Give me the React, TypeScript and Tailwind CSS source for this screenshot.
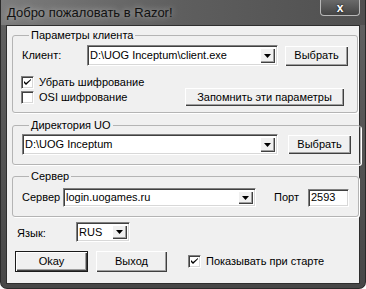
import React from "react";

const face = "bg-[#f0f0f0]";

function Raised({
  w,
  h,
  children,
  isDefault = false,
}: {
  w: number;
  h: number;
  children: React.ReactNode;
  isDefault?: boolean;
}) {
  return (
    <div
      style={{ width: w, height: h }}
      className={`flex items-center justify-center ${face} ${
        isDefault
          ? "border border-[#1a1a1a] shadow-[inset_1px_1px_0_#ffffff,inset_-1px_-1px_0_#404040,inset_-2px_-2px_0_#a0a0a0]"
          : "shadow-[inset_1px_1px_0_#ffffff,inset_-1px_-1px_0_#404040,inset_-2px_-2px_0_#a0a0a0]"
      }`}
    >
      {children}
    </div>
  );
}

function Sunken({ w, h, children }: { w: number; h: number; children?: React.ReactNode }) {
  return (
    <div
      style={{ width: w, height: h }}
      className="flex items-center bg-white border border-t-[#808080] border-l-[#808080] border-b-white border-r-white shadow-[inset_1px_1px_0_#404040,inset_-1px_-1px_0_#d8d8d8]"
    >
      {children}
    </div>
  );
}

function Combo({ w, h, value }: { w: number; h: number; value: string }) {
  return (
    <Sunken w={w} h={h}>
      <span className="flex-1 pl-[2px] truncate text-black">{value}</span>
      <div className="mr-[2px] self-stretch my-[2px] w-[15px] flex items-center justify-center bg-[#f0f0f0] shadow-[inset_1px_1px_0_#ffffff,inset_-1px_-1px_0_#404040,inset_-2px_-2px_0_#a0a0a0]">
        <svg width="7" height="4" viewBox="0 0 7 4">
          <path d="M0 0h7L3.5 4z" fill="#000" />
        </svg>
      </div>
    </Sunken>
  );
}

function Check({ checked, label }: { checked: boolean; label: string }) {
  return (
    <div className="flex items-center h-[14px]">
      <div className="w-[13px] h-[13px] bg-white border border-t-[#808080] border-l-[#808080] border-b-white border-r-white shadow-[inset_1px_1px_0_#404040,inset_-1px_-1px_0_#d8d8d8] flex items-center justify-center">
        {checked && (
          <svg width="7" height="7" viewBox="0 0 7 7">
            <path d="M0 2v2l2 2 5-5V0L2 4z" fill="#000" />
          </svg>
        )}
      </div>
      <span className="ml-[5px]">{label}</span>
    </div>
  );
}

function Group({
  title,
  className,
  children,
}: {
  title: string;
  className: string;
  children: React.ReactNode;
}) {
  return (
    <fieldset
      className={`border border-[#b4b4b4] rounded-[3px] shadow-[1px_1px_0_#ffffff] px-[9px] ${className}`}
    >
      <legend className="ml-[7px] px-[2px] leading-[13px]">{title}</legend>
      {children}
    </fieldset>
  );
}

export default function App() {
  return (
    <div className="w-[366px] h-[289px] bg-white font-['Liberation_Sans',Arial,sans-serif] text-[11px] text-black">
      <div className="w-full h-full flex flex-col rounded-b-[7px] border border-[#2a2a2a] border-t-0 bg-gradient-to-b from-[#626262] to-[#474747]">
        {/* Title bar */}
        <div className="h-[25px] flex items-start justify-between bg-gradient-to-r from-[#7c7c7c] via-[#5e5e5e] to-[#505050]">
          <span className="pl-[6px] pt-[5px] text-[13px] leading-[16px] text-[#111] [text-shadow:0_0_6px_rgba(255,255,255,0.6)]">
            Добро пожаловать в Razor!
          </span>
          <div className="mr-[5px] w-[40px] h-[16px] rounded-b-[4px] border border-t-0 border-[#b8b8b8] bg-gradient-to-b from-[#6a6a6a] to-[#444] flex items-center justify-center">
            <span className="text-white font-bold text-[12px] leading-none [text-shadow:0_0_2px_#000]">x</span>
          </div>
        </div>

        {/* Client area */}
        <div className={`mx-[5px] h-[259px] border border-[#2e2e2e] ${face} px-[5px] flex flex-col`}>
          <Group title="Параметры клиента" className="mt-[3px] h-[84px]">
            <div className="mt-[3px] flex items-center h-[21px]">
              <span className="w-[65px]">Клиент:</span>
              <Combo w={191} h={21} value="D:\UOG Inceptum\client.exe" />
              <div className="ml-[7px]">
                <Raised w={63} h={20}>Выбрать</Raised>
              </div>
            </div>
            <div className="mt-[9px] flex items-start justify-between">
              <div className="flex flex-col gap-[1px] -ml-[1px]">
                <Check checked label="Убрать шифрование" />
                <Check checked={false} label="OSI шифрование" />
              </div>
              <div className="mt-[13px] mr-[4px]">
                <Raised w={159} h={18}>Запомнить эти параметры</Raised>
              </div>
            </div>
          </Group>

          <Group title="Директория UO" className="mt-[6px] h-[46px] px-[6px]">
            <div className="mt-[2px] flex items-center">
              <Combo w={256} h={21} value="D:\UOG Inceptum" />
              <div className="ml-[10px]">
                <Raised w={63} h={19}>Выбрать</Raised>
              </div>
            </div>
          </Group>

          <Group title="Сервер" className="mt-[5px] h-[47px]">
            <div className="mt-[5px] flex items-center">
              <span className="w-[41px]">Сервер</span>
              <Combo w={193} h={19} value="login.uogames.ru" />
              <span className="ml-[18px] w-[34px]">Порт</span>
              <Sunken w={41} h={18}>
                <span className="pl-[2px]">2593</span>
              </Sunken>
            </div>
          </Group>

          <div className="mt-[5px] flex items-center pl-[5px]">
            <span className="w-[59px] pt-[3px]">Язык:</span>
            <Combo w={54} h={20} value="RUS" />
          </div>

          <div className="mt-[9px] flex items-center pl-[3px]">
            <Raised w={73} h={21} isDefault>
              Okay
            </Raised>
            <div className="ml-[8px]">
              <Raised w={71} h={21}>Выход</Raised>
            </div>
            <div className="ml-[21px]">
              <Check checked label="Показывать при старте" />
            </div>
          </div>
        </div>
      </div>
    </div>
  );
}
